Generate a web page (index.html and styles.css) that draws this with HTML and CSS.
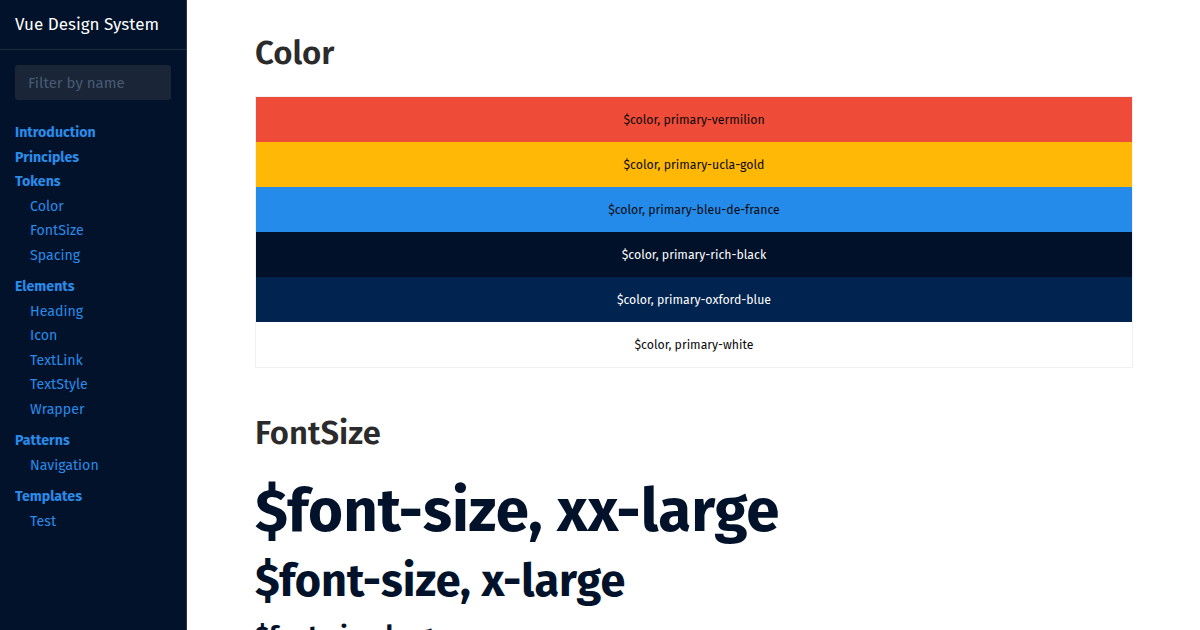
FILE: index.html
```html
<!DOCTYPE html>
<html>
<head>
<meta charset="utf-8">
<link rel="stylesheet" href="styles.css">
</head>
<body>
<div class="app">
  <aside class="sidebar">
    <div class="brand">Vue Design System</div>
    <div class="search"><input class="filter" type="text" placeholder="Filter by name"></div>
    <nav class="nav">
      <ul class="groups">
        <li class="group"><a class="top">Introduction</a></li>
        <li class="group"><a class="top">Principles</a></li>
        <li class="group"><a class="top">Tokens</a>
          <ul class="subs"><li><a class="sub">Color</a></li><li><a class="sub">FontSize</a></li><li><a class="sub">Spacing</a></li></ul>
        </li>
        <li class="group"><a class="top">Elements</a>
          <ul class="subs"><li><a class="sub">Heading</a></li><li><a class="sub">Icon</a></li><li><a class="sub">TextLink</a></li><li><a class="sub">TextStyle</a></li><li><a class="sub">Wrapper</a></li></ul>
        </li>
        <li class="group"><a class="top">Patterns</a>
          <ul class="subs"><li><a class="sub">Navigation</a></li></ul>
        </li>
        <li class="group"><a class="top">Templates</a>
          <ul class="subs"><li><a class="sub">Test</a></li></ul>
        </li>
      </ul>
    </nav>
  </aside>
  <main class="content">
    <h1 class="section-title">Color</h1>
    <div class="swatches">
      <div class="swatch vermilion">$color, primary-vermilion</div>
      <div class="swatch gold">$color, primary-ucla-gold</div>
      <div class="swatch bleu">$color, primary-bleu-de-france</div>
      <div class="swatch rich">$color, primary-rich-black</div>
      <div class="swatch oxford">$color, primary-oxford-blue</div>
      <div class="swatch white">$color, primary-white</div>
    </div>
    <h2 class="section-title small">FontSize</h2>
    <div class="fs xxl">$font-size, xx-large</div>
    <div class="fs xl">$font-size, x-large</div>
    <div class="fs l">$font-size, large</div>
  </main>
</div>
</body>
</html>
```
FILE: styles.css
```css
html, body {
  margin: 0;
  padding: 0;
  height: 100%;
  overflow: hidden;
  background: #fff;
  font-family: "Fira Sans", "Lato", "Noto Sans", sans-serif;
}
.app {
  display: flex;
  height: 630px;
}
.sidebar {
  width: 186px;
  flex: none;
  background: #01122a;
  border-right: 1px solid #2b3545;
}
.brand {
  color: #fff;
  font-size: 17px;
  padding: 14px 15px 0;
  box-sizing: border-box;
  height: 50px;
  border-bottom: 1px solid #1f2a3b;
}
.search {
  padding: 15px 15px 0;
}
.filter {
  display: block;
  width: 100%;
  height: 35px;
  box-sizing: border-box;
  border: none;
  border-radius: 3px;
  background: #1a2638;
  padding: 0 13px;
  font-family: inherit;
  font-size: 15px;
  color: #fff;
}
.filter::placeholder { color: #485a73; }
.nav { padding: 21px 15px 0; }
.groups, .subs { list-style: none; margin: 0; padding: 0; }
.group { margin-bottom: 7px; }
.top, .sub {
  display: block;
  color: #2a8be8;
  font-size: 14.2px;
  line-height: 24.5px;
}
.top { font-weight: 700; }
.sub { padding-left: 15px; }
.group:nth-child(1), .group:nth-child(2) { margin-bottom: 0; }
.content {
  flex: 1;
  padding: 0 67px 0 68px;
}
.section-title {
  margin: 33px 0 0;
  font-size: 33px;
  font-weight: 600;
  color: #2b2b2b;
  line-height: 40px;
}
.swatches {
  margin-top: 23px;
  border: 1px solid #eef0f3;
}
.swatch {
  height: 45px;
  display: flex;
  align-items: center;
  justify-content: center;
  font-size: 12.3px;
  color: #0a0a0a;
  padding-bottom: 1px;
  box-sizing: border-box;
}
.vermilion { background: #ee4b38; }
.gold { background: #ffb806; }
.bleu { background: #248bea; }
.rich { background: #01112a; color: #fff; }
.oxford { background: #002350; color: #fff; }
.white { background: #fff; }
.section-title.small {
  margin-top: 45px;
  font-size: 32.8px;
}
.fs {
  color: #01122a;
  font-weight: 700;
  white-space: nowrap;
}
.xxl { font-size: 60px; line-height: 70px; margin-top: 23px; }
.xl { font-size: 45px; line-height: 56px; margin-top: 7px; }
.l { font-size: 26px; line-height: 36px; margin-top: 9px; }
```
